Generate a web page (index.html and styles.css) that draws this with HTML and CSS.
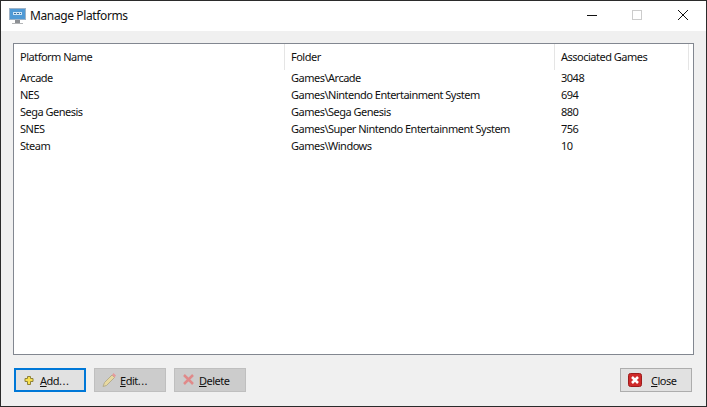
FILE: index.html
```html
<!DOCTYPE html>
<html lang="en">
<head>
<meta charset="utf-8">
<title>Manage Platforms</title>
<link rel="stylesheet" href="styles.css">
</head>
<body>
<div class="window">
  <header class="titlebar">
    <svg class="app-icon" width="18" height="18" viewBox="0 0 18 18">
      <rect x="0" y="1" width="17" height="12" fill="#9fb4c8"/>
      <rect x="1" y="2" width="15" height="10" fill="#4f9ad6"/>
      <rect x="4" y="5" width="9" height="3" fill="#cfe4f5"/>
      <rect x="5" y="6" width="2" height="1" fill="#3a6f9e"/>
      <rect x="8" y="6" width="2" height="1" fill="#3a6f9e"/>
      <rect x="11" y="6" width="1" height="1" fill="#3a6f9e"/>
      <rect x="6" y="13" width="5" height="3" fill="#8d9094"/>
      <rect x="3" y="16" width="11" height="1" fill="#b4b6b8"/>
    </svg>
    <span class="title">Manage Platforms</span>
    <div class="controls">
      <svg class="ctl" width="46" height="30" viewBox="0 0 46 30"><path d="M19 14.500h10" stroke="#111" fill="none"/></svg>
      <svg class="ctl" width="46" height="30" viewBox="0 0 46 30"><rect x="18.500" y="9.500" width="9" height="9" stroke="#ccc" fill="none"/></svg>
      <svg class="ctl" width="46" height="30" viewBox="0 0 46 30"><path d="M18 9l10 10M28 9L18 19" stroke="#111" fill="none"/></svg>
    </div>
  </header>
  <main class="content">
    <section class="list">
      <div class="row head">
        <div class="cell sep">Platform Name</div>
        <div class="cell sep">Folder</div>
        <div class="cell sep">Associated Games</div>
      </div>
      <div class="rows">
        <div class="row"><div class="cell">Arcade</div><div class="cell">Games\Arcade</div><div class="cell">3048</div></div>
        <div class="row"><div class="cell">NES</div><div class="cell">Games\Nintendo Entertainment System</div><div class="cell">694</div></div>
        <div class="row"><div class="cell">Sega Genesis</div><div class="cell">Games\Sega Genesis</div><div class="cell">880</div></div>
        <div class="row"><div class="cell">SNES</div><div class="cell">Games\Super Nintendo Entertainment System</div><div class="cell">756</div></div>
        <div class="row"><div class="cell">Steam</div><div class="cell">Games\Windows</div><div class="cell">10</div></div>
      </div>
    </section>
    <footer class="actions">
      <button class="btn focus">
        <svg width="16" height="16" viewBox="0 0 16 16"><path d="M5.500 4.500h3v2h2.500v3H8.500v3h-3v-3H3v-3h2.500z" fill="#f7e04f" stroke="#8f8238"/></svg>
        <span><u>A</u>dd<span class="dots">...</span></span>
      </button>
      <button class="btn off">
        <svg width="16" height="16" viewBox="0 0 16 16"><path d="M1 14.500l1.500-4L10 3l2.500 2.500-8 8z" fill="#e8d9a0" stroke="#b5ad8c"/><path d="M10 3l1.500-2 2.500 2.500-1.500 2z" fill="#e59a9a"/></svg>
        <span><u>E</u>dit<span class="dots">...</span></span>
      </button>
      <button class="btn off tight">
        <svg width="16" height="16" viewBox="0 0 16 16"><path d="M2 3l9 9M11 3L2 12" stroke="#e08a8a" stroke-width="2.500" fill="none"/></svg>
        <span><u>D</u>elete</span>
      </button>
      <button class="btn close">
        <svg width="16" height="16" viewBox="0 0 16 16"><rect x="0.500" y="1.500" width="13" height="13" rx="2" fill="#cf2a2a" stroke="#9c1c1c"/><path d="M4 5l6 6M10 5l-6 6" stroke="#fff" stroke-width="2.500" fill="none"/></svg>
        <span><u>C</u>lose</span>
      </button>
    </footer>
  </main>
</div>
</body>
</html>
```
FILE: styles.css
```css
* { box-sizing: border-box; }
html, body { margin: 0; padding: 0; }
body {
  width: 707px;
  height: 407px;
  font-family: "Noto Sans", "Open Sans", sans-serif;
  font-size: 11px;
  letter-spacing: -0.500px;
  color: #111;
}
.window {
  width: 707px;
  height: 407px;
  display: flex;
  flex-direction: column;
  background: #f0f0f0;
  border: 1px solid #2b2b2b;
}
.titlebar {
  height: 30px;
  flex: none;
  display: flex;
  align-items: center;
  background: #fff;
  padding-left: 8px;
}
.app-icon { flex: none; }
.title {
  margin: 0 0 2px 3px;
  font-size: 12px;
  letter-spacing: -0.380px;
}
.controls { margin-left: auto; display: flex; }
.ctl { display: block; }
.content {
  flex: 1;
  display: flex;
  flex-direction: column;
  padding: 12px;
}
.list {
  height: 312px;
  flex: none;
  background: #fff;
  border: 1px solid #828790;
}
.row {
  display: grid;
  grid-template-columns: 271px 270px 134px;
  height: 17px;
  line-height: 17px;
}
.head { height: 25px; line-height: 26px; }
.cell { padding-left: 6px; white-space: nowrap; }
.sep { border-right: 1px solid #e5e5e5; }
.actions {
  display: flex;
  gap: 8px;
  margin-top: 13px;
  padding: 0 2px 0 1px;
}
.btn {
  width: 72px;
  height: 24px;
  display: flex;
  align-items: center;
  padding: 0 0 0 7px;
  gap: 2px;
  font: inherit;
  letter-spacing: inherit;
  color: #111;
  background: #e1e1e1;
  border: 1px solid #adadad;
}
.btn svg { flex: none; }
.dots { letter-spacing: 0.500px; }
.focus { border: 2px solid #0078d7; padding-left: 6px; }
.off { background: #cccccc; border-color: #bfbfbf; }
.tight { gap: 1px; }
.close { margin-left: auto; gap: 7px; }
```
